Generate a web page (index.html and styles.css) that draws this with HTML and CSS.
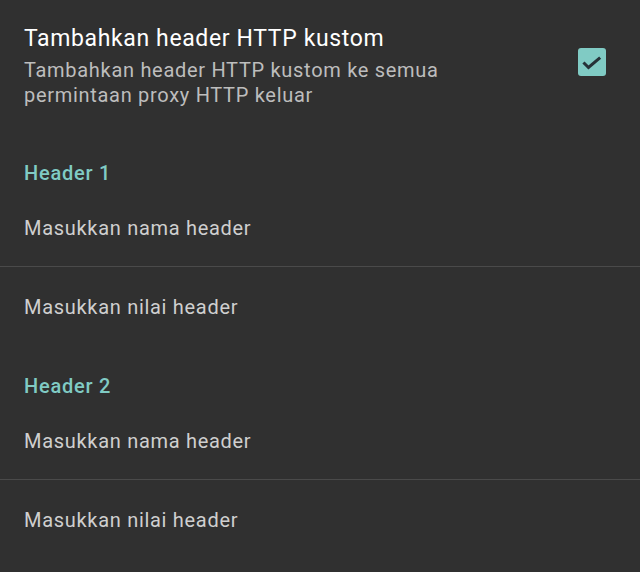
FILE: index.html
```html
<!DOCTYPE html>
<html lang="id">
<head>
<meta charset="utf-8">
<title>Header HTTP kustom</title>
<link rel="stylesheet" href="styles.css">
</head>
<body>
<div class="screen">
  <div class="pref">
    <div class="pref-text">
      <div class="pref-title">Tambahkan header HTTP kustom</div>
      <div class="pref-summary">Tambahkan header HTTP kustom ke semua permintaan proxy HTTP keluar</div>
    </div>
    <div class="checkbox">
      <svg viewBox="0 0 28 28" width="28" height="28">
        <path d="M6.5 15.5 L10.5 19.5 L21 10.5" fill="none" stroke="#263238" stroke-width="3" stroke-linecap="square"/>
      </svg>
    </div>
  </div>

  <div class="group">
    <div class="group-title">Header 1</div>
    <div class="field field-name">Masukkan nama header</div>
    <div class="field field-value">Masukkan nilai header</div>
  </div>

  <div class="group">
    <div class="group-title">Header 2</div>
    <div class="field field-name">Masukkan nama header</div>
    <div class="field field-value">Masukkan nilai header</div>
  </div>
</div>
</body>
</html>
```

FILE: styles.css
```css
html, body {
  margin: 0;
  padding: 0;
  background: #303030;
}

.screen {
  width: 640px;
  height: 572px;
  overflow: hidden;
  background: #303030;
  font-family: Roboto, "Noto Sans", sans-serif;
}

.pref {
  display: flex;
  align-items: flex-start;
  padding: 25px 34px 0 24px;
}

.pref-text {
  flex: 1;
}

.pref-title {
  font-size: 23px;
  line-height: 28px;
  letter-spacing: 0.63px;
  color: #ffffff;
}

.pref-summary {
  margin-top: 5px;
  font-size: 20px;
  line-height: 25px;
  letter-spacing: 0.7px;
  color: #bdbdbd;
  max-width: 450px;
}

.checkbox {
  width: 28px;
  height: 28px;
  margin-top: 23px;
  border-radius: 3px;
  background: #80cbc4;
}

.checkbox svg {
  display: block;
}

.group {
  padding-top: 53px;
}

.group + .group {
  padding-top: 55px;
}

.group-title {
  padding-left: 24px;
  font-size: 20px;
  line-height: 24px;
  font-weight: 500;
  letter-spacing: 0.75px;
  color: #80cbc4;
}

.field {
  padding-left: 24px;
  font-size: 20px;
  line-height: 24px;
  letter-spacing: 0.7px;
  color: #cfcfcf;
}

.field-name {
  padding-top: 31px;
  padding-bottom: 26px;
  border-bottom: 1px solid #4a4a4a;
}

.field-value {
  padding-top: 28px;
}
```
